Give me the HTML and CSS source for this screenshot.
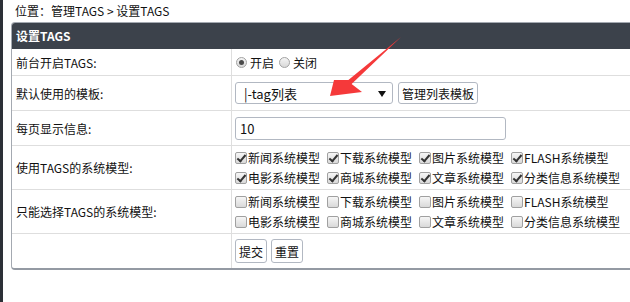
FILE: index.html
```html
<!DOCTYPE html>
<html lang="zh-CN">
<head>
    <meta charset="UTF-8">
    <meta name="viewport" content="width=device-width, initial-scale=1.0">
    <title>设置TAGS</title>
    <link rel="stylesheet" href="styles.css">
</head>
<body>
    <div class="side"></div>
    <div class="main">
        <div class="crumb">位置：管理TAGS &gt; 设置TAGS</div>
        <form class="panel">
            <div class="panel-head">设置TAGS</div>

            <div class="row h26">
                <div class="label">前台开启TAGS:</div>
                <div class="field">
                    <input type="radio" name="open" class="rd" checked><span class="opt">开启</span>
                    <input type="radio" name="open" class="rd"><span class="opt">关闭</span>
                </div>
            </div>

            <div class="row h35">
                <div class="label">默认使用的模板:</div>
                <div class="field">
                    <span class="sel-wrap">
                        <select class="sel"><option>|-tag列表</option></select>
                    </span>
                    <button type="button" class="btn btn-wide">管理列表模板</button>
                </div>
            </div>

            <div class="row h35">
                <div class="label">每页显示信息:</div>
                <div class="field">
                    <input type="text" class="txt" value="10">
                </div>
            </div>

            <div class="row h44">
                <div class="label">使用TAGS的系统模型:</div>
                <div class="field">
                    <div class="checks">
                        <label><input type="checkbox" class="cb" checked>新闻系统模型</label>
                        <label><input type="checkbox" class="cb" checked>下载系统模型</label>
                        <label><input type="checkbox" class="cb" checked>图片系统模型</label>
                        <label><input type="checkbox" class="cb" checked>FLASH系统模型</label>
                        <label><input type="checkbox" class="cb" checked>电影系统模型</label>
                        <label><input type="checkbox" class="cb" checked>商城系统模型</label>
                        <label><input type="checkbox" class="cb" checked>文章系统模型</label>
                        <label><input type="checkbox" class="cb" checked>分类信息系统模型</label>
                    </div>
                </div>
            </div>

            <div class="row h44">
                <div class="label">只能选择TAGS的系统模型:</div>
                <div class="field">
                    <div class="checks">
                        <label><input type="checkbox" class="cb">新闻系统模型</label>
                        <label><input type="checkbox" class="cb">下载系统模型</label>
                        <label><input type="checkbox" class="cb">图片系统模型</label>
                        <label><input type="checkbox" class="cb">FLASH系统模型</label>
                        <label><input type="checkbox" class="cb">电影系统模型</label>
                        <label><input type="checkbox" class="cb">商城系统模型</label>
                        <label><input type="checkbox" class="cb">文章系统模型</label>
                        <label><input type="checkbox" class="cb">分类信息系统模型</label>
                    </div>
                </div>
            </div>

            <div class="row h35">
                <div class="label"></div>
                <div class="field">
                    <button type="submit" class="btn btn-sm">提交</button>
                    <button type="reset" class="btn btn-sm">重置</button>
                </div>
            </div>
        </form>
    </div>

    <!-- red arrow drawn on top of the screenshot -->
    <svg class="arrow" width="630" height="302" viewBox="0 0 630 302">
        <polygon points="401,37 351.6,84 362,92 330,96 334,80 348.4,80.1" fill="#f5393a"/>
    </svg>
</body>
</html>
```

FILE: styles.css
```css
*{
    margin: 0;padding: 0;box-sizing: border-box;
}
body{
    width: 630px;
    height: 302px;
    display: flex;
    overflow: hidden;
    background-color: white;
    font-family: "Noto Sans CJK SC", "Noto Sans", sans-serif;
    font-size: 12px;
    color: #111;
}
.side{
    width: 3px;
    flex: none;
    background-color: #2c3037;
}
.main{
    flex: 1;
    padding-left: 8px;
    overflow: hidden;
}
.crumb{
    height: 22px;
    line-height: 22px;
    padding-left: 4px;
}
.panel{
    width: 660px;
    border: 1px solid #a4a9b1;
    border-bottom: 2px solid #949aa3;
    border-radius: 4px;
    overflow: hidden;
}
.panel-head{
    height: 26px;
    line-height: 26px;
    padding-left: 4px;
    background-color: #3c424b;
    color: white;
    font-weight: bold;
}
.row{
    display: grid;
    grid-template-columns: 220px 1fr;
    border-top: 1px solid #dedede;
}
.panel-head + .row{
    border-top: none;
}
.h26{ height: 26px; }
.h35{ height: 35px; }
.h44{ height: 44px; }

.label{
    display: flex;
    align-items: center;
    padding-left: 4px;
    border-right: 1px solid #dedede;
}
.field{
    display: flex;
    align-items: center;
    padding-left: 3px;
}

/* radios */
.rd{
    appearance: none;
    width: 11px;
    height: 11px;
    margin: 0 3px 0 1px;
    border: 1px solid #a2a2a2;
    border-radius: 50%;
    background: linear-gradient(#f4f4f4, #d8d8d8);
    position: relative;
}
.rd:checked::after{
    content: "";
    position: absolute;
    left: 2px;
    top: 2px;
    width: 5px;
    height: 5px;
    border-radius: 50%;
    background-color: #4a4a4a;
}
.opt{
    margin-right: 4px;
}

/* select + buttons */
.sel-wrap{
    position: relative;
    display: inline-block;
    margin-right: 5px;
}
.sel-wrap::after{
    content: "";
    position: absolute;
    right: 7px;
    top: 9px;
    border-left: 4px solid transparent;
    border-right: 4px solid transparent;
    border-top: 6px solid #111;
}
.sel{
    appearance: none;
    display: block;
    width: 158px;
    height: 22px;
    padding-left: 8px;
    border: 1px solid #b2b8c2;
    border-radius: 3px;
    background-color: white;
    font-family: inherit;
    font-size: 13px;
    color: #111;
}
.btn{
    height: 22px;
    border: 1px solid #b2b8c2;
    border-radius: 3px;
    background-color: white;
    font-family: inherit;
    font-size: 12px;
    color: #111;
}
.btn-wide{
    width: 80px;
}
.btn-sm{
    width: 32px;
    height: 24px;
    margin-right: 4px;
}
.txt{
    width: 271px;
    height: 23px;
    padding-left: 4px;
    border: 1px solid #b2b8c2;
    border-radius: 3px;
    font-family: inherit;
    font-size: 13px;
    color: #111;
}

/* checkbox grid */
.checks{
    display: grid;
    grid-template-columns: repeat(4, auto);
    grid-auto-rows: 20px;
    column-gap: 7px;
}
.checks label{
    display: flex;
    align-items: center;
    white-space: nowrap;
}
.cb{
    appearance: none;
    width: 12px;
    height: 12px;
    margin-right: 1px;
    border: 1px solid #a0a0a0;
    border-radius: 2px;
    background: linear-gradient(#f6f6f6, #d9d9d9);
    position: relative;
}
.cb:checked::after{
    content: "";
    position: absolute;
    left: 3px;
    top: 0px;
    width: 3px;
    height: 7px;
    border-right: 2px solid #333;
    border-bottom: 2px solid #333;
    transform: rotate(40deg);
}

.arrow{
    position: absolute;
    left: 0;
    top: 0;
    pointer-events: none;
}
```
